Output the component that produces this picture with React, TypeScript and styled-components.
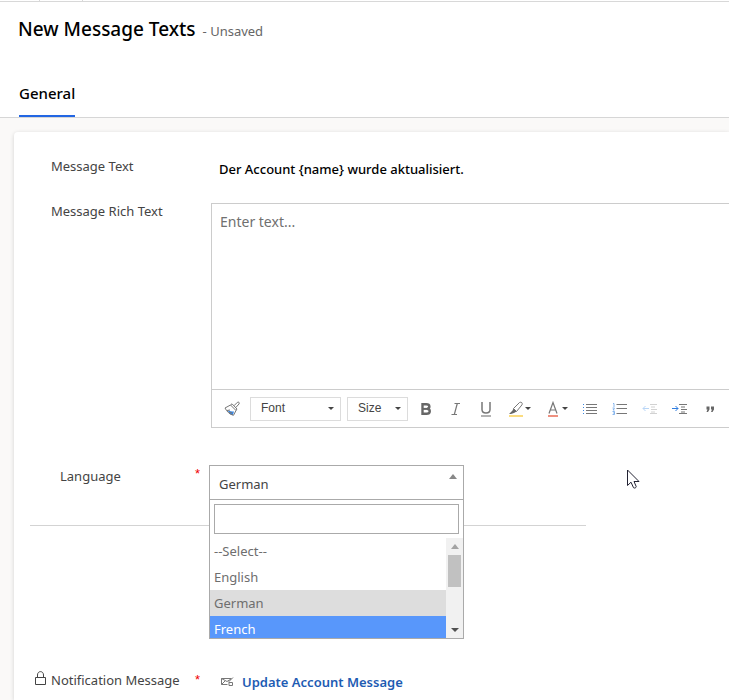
import React from "react";
import styled, { createGlobalStyle, css } from "styled-components";

const GlobalStyle = createGlobalStyle`
  *, *::before, *::after { box-sizing: border-box; }
  body {
    margin: 0;
    background: #faf9f8;
    font-family: "Segoe UI", "Noto Sans", sans-serif;
    font-size: 13px;
    line-height: 20px;
    color: #444444;
  }
  button, input, select, textarea { font: inherit; color: inherit; margin: 0; }
`;

const Page = styled.div`
  min-height: 100vh;
  display: flex;
  flex-direction: column;
  overflow: hidden;
`;

const CommandEdge = styled.div`
  display: flex;
  height: 2px;
  padding-left: 39px;
  background: #fff;
  border-bottom: 1px solid #d8d8d8;
`;

const EdgeCell = styled.span`
  width: 44px;
  border: solid #d8d8d8;
  border-width: 0 1px;
`;

const Header = styled.header`
  background: #fff;
  border-bottom: 1px solid #d6d6d6;
  padding: 13px 18px 0;
`;

const TitleLine = styled.div`
  display: flex;
  align-items: baseline;
  gap: 7px;
`;

const Title = styled.h1`
  margin: 0;
  font-size: 19px;
  line-height: 28px;
  font-weight: 500;
  color: #000;
`;

const Status = styled.span`
  color: #666;
`;

const TabList = styled.div`
  display: flex;
  margin: 37px 0 0 1px;
`;

const Tab = styled.button`
  height: 37px;
  padding: 0 0 10px;
  border: 0;
  border-bottom: 2px solid #2266e3;
  background: none;
  color: #000;
  font-size: 15px;
  font-weight: 500;
`;

const Card = styled.main`
  flex: 1;
  margin: 14px 0 0 14px;
  padding: 24px 0 8px;
  background: #fff;
  border-top-left-radius: 4px;
  box-shadow: 0 1px 4px rgba(0, 0, 0, 0.16);
`;

const Field = styled.div<{ $gap?: number }>`
  display: grid;
  grid-template-columns: 160px minmax(0, 1fr);
  padding-left: 37px;
  margin-bottom: ${(p) => p.$gap ?? 0}px;
`;

const Label = styled.label``;

const TextValue = styled.input`
  height: 24px;
  padding: 2px 8px 0;
  border: 0;
  background: none;
  color: #000;
  font-weight: 500;
  width: 100%;
`;

const Editor = styled.div`
  border: 1px solid #cccccc;
  border-right: 0;
`;

const RichLabel = styled(Label)`
  margin-top: -2px;
`;

const EditorText = styled.textarea`
  display: block;
  width: 100%;
  height: 185px;
  padding: 8px;
  border: 0;
  resize: none;
  outline: none;
  font-family: "Comic Sans MS", "Noto Sans", sans-serif;
  font-size: 14px;
  &::placeholder { color: #707070; opacity: 1; }
`;

const Toolbar = styled.div`
  display: flex;
  align-items: center;
  height: 38px;
  padding-left: 5px;
  border-top: 1px solid #cccccc;
  overflow: hidden;
`;

const Tool = styled.button<{ $wide?: boolean }>`
  flex: none;
  display: flex;
  align-items: center;
  justify-content: center;
  gap: 1px;
  width: ${(p) => (p.$wide ? 37 : 30)}px;
  height: 30px;
  padding: 0;
  border: 0;
  background: none;
`;

const Picker = styled.span<{ $width: number }>`
  flex: none;
  display: grid;
  align-items: center;
  width: ${(p) => p.$width}px;
  height: 24px;
  margin: 0 3px;
  border: 1px solid #dcdcdc;
  > * { grid-area: 1 / 1; }
  > svg { justify-self: end; margin-right: 6px; pointer-events: none; }
`;

const PickerSelect = styled.select`
  width: 100%;
  height: 22px;
  padding: 0 10px 2px;
  border: 0;
  appearance: none;
  background: none;
  font-family: "Liberation Sans", Arial, sans-serif;
  font-size: 12px;
`;

const LanguageSection = styled.section`
  display: flex;
  align-items: flex-start;
  width: 100%;
  max-width: 556px;
  height: 61px;
  margin: 37px 0 0 16px;
  padding-left: 30px;
  border-bottom: 1px solid #d3d3d3;
`;

const LanguageLabel = styled.label`
  width: 135px;
  padding-top: 1px;
`;

const Required = styled.span`
  width: 14px;
  font-family: "Liberation Sans", Arial, sans-serif;
  line-height: 18px;
  color: #f00000;
`;

const Combo = styled.div`
  position: relative;
  flex: none;
  width: 255px;
`;

const ComboHead = styled.button`
  display: flex;
  justify-content: space-between;
  width: 100%;
  height: 35px;
  padding: 8px 6px 0 9px;
  border: 1px solid #aaaaaa;
  background: #fff;
  text-align: left;
`;

const ComboPopup = styled.div`
  position: absolute;
  top: 100%;
  left: 0;
  right: 0;
  border: 1px solid #aaaaaa;
  border-top: 0;
  background: #fff;
`;

const SearchBox = styled.div`
  padding: 4px;
`;

const SearchInput = styled.input`
  display: block;
  width: 100%;
  height: 30px;
  padding: 4px;
  border: 1px solid #aaaaaa;
  outline: none;
`;

const ListArea = styled.div`
  display: flex;
  height: 100px;
`;

const Options = styled.ul`
  flex: 1;
  margin: 0;
  padding: 0;
  list-style: none;
  overflow: hidden;
`;

const Option = styled.li<{ $state?: "selected" | "active" }>`
  height: 26px;
  padding: 3px 4px;
  color: #6e6e6e;
  ${(p) => p.$state === "selected" && css`background: #dddddd;`}
  ${(p) => p.$state === "active" && css`background: #5897fb; color: #fff;`}
`;

const ScrollTrack = styled.div`
  display: flex;
  flex-direction: column;
  align-items: center;
  width: 17px;
  background: #f1f1f1;
`;

const ScrollArrow = styled.span`
  display: flex;
  align-items: center;
  justify-content: center;
  height: 17px;
  &:last-child { margin-top: auto; }
`;

const ScrollThumb = styled.span`
  width: 13px;
  height: 32px;
  background: #c1c1c1;
`;

const LookupRow = styled.div`
  display: flex;
  align-items: center;
  margin-top: 142px;
  padding-left: 20px;
`;

const LockSlot = styled.span`
  display: flex;
  width: 17px;
  padding: 0 0 4px 1px;
`;

const LookupLabel = styled.span`
  width: 144px;
`;

const LookupLink = styled.a`
  display: flex;
  align-items: center;
  gap: 8px;
  margin: 4px 0 0 12px;
  color: #1e5cb3;
  font-weight: 600;
  text-decoration: none;
`;

const Pointer = styled.svg`
  position: absolute;
  left: 627px;
  top: 469px;
  pointer-events: none;
`;

function Caret({ up = false, color = "#444", size = 6 }: { up?: boolean; color?: string; size?: number }) {
  return (
    <svg width={size} height={size / 2 + (up ? 1 : 0)} viewBox={up ? "0 0 8 5" : "0 0 8 4"} aria-hidden="true">
      <path d={up ? "M0 5 4 0l4 5z" : "M0 0h8L4 4z"} fill={color} />
    </svg>
  );
}

function Icon({ children, size = 16 }: { children: React.ReactNode; size?: number }) {
  return (
    <svg width={size} height={size} viewBox="0 0 16 16" fill="none" stroke="#777" aria-hidden="true">
      {children}
    </svg>
  );
}

const BrushIcon = () => (
  <Icon>
    <path d="M3.500 9.500c2 .5 4.500 1 6.500 1L8.800 14.300 6.500 13.500z" fill="#3b86df" stroke="none" />
    <path d="M1 7 6.500 4l5.500 5.500-2.500 4.800C6 13.500 3 11 1 7zM6.500 4 8 2.800 13 8l-1 1.500M10 4.700l3.300-3.300c1.200-1 2.600.3 1.700 1.600L11.800 6.500M3 9.500l3-.5M5 12l3-.5" />
  </Icon>
);

const BoldIcon = () => (
  <Icon>
    <path d="M4.500 3.200h3.800c4 0 3.900 4.300.8 4.600 3.600.3 3.700 5-.6 5h-4z" stroke="#666" strokeWidth="2.400" />
    <path d="M4 7.900h5" stroke="#666" strokeWidth="2" />
  </Icon>
);

const ItalicIcon = () => (
  <Icon><path d="M6.500 2.500H12M3.500 13.500H9M9.300 2.500l-3 11" strokeWidth="1.200" /></Icon>
);

const UnderlineIcon = () => (
  <Icon>
    <path d="M4 1v7.500c0 4.700 8 4.700 8 0V1" strokeWidth="1.500" />
    <path d="M3 15h10" stroke="#aaa" strokeWidth="1.800" />
  </Icon>
);

const HighlightIcon = () => (
  <Icon>
    <path d="M1 15h14" stroke="#fbdc80" strokeWidth="2" />
    <path d="M5.500 7.500 11.500 1.500c1.800-1 3.400.500 2.500 2.300L8.500 10.500z" />
    <path d="M5.500 7.500 8.500 10.500 6 12 3 13H1L4.500 9.500z" fill="#666" stroke="none" />
  </Icon>
);

const TextColorIcon = () => (
  <Icon>
    <path d="M4 12.500 8 1.500l4 11M5.300 9h5.400" strokeWidth="1.200" />
    <path d="M3 15h10" stroke="#ee9080" strokeWidth="2" />
  </Icon>
);

const BulletIcon = () => (
  <Icon>
    <path d="M4 3.500h11M4 6.500h11M4 9.500h11M4 12.500h11" />
    <path d="M1 3.500h1M1 6.500h1M1 9.500h1M1 12.500h1" stroke="#3b86df" />
  </Icon>
);

const NumberIcon = () => (
  <Icon>
    <path d="M4.500 3.500H15M4.500 7.500H15M4.500 12.500H15" />
    <path d="M1 2.500h1V6M.5 7h2L1 9h1.500M.5 10.500h2v3h-2M1 12h1.500" stroke="#6ba5ea" strokeWidth=".8" />
  </Icon>
);

const OutdentIcon = () => (
  <Icon>
    <path d="M8 3.500h7M9 6h4M9 8.500h6M9 11h4M8 12.500h7" stroke="#d2d2d2" />
    <path d="M7 7.500H1M3.500 5 1 7.500l2.500 2.500" stroke="#b9d6f7" />
  </Icon>
);

const IndentIcon = () => (
  <Icon>
    <path d="M7 3.500h8M9 6h4M9 8.500h6M9 11h4M7 12.500h8" />
    <path d="M0 7.500h6M3.500 5 6 7.500l-2.500 2.500" stroke="#2f7de0" />
  </Icon>
);

const QuoteIcon = () => (
  <Icon>
    <path d="M4.500 5.500h3v3L6 11H4.500l1-2.500h-1zM9 5.500h3v3L10.500 11H9l1-2.500H9z" fill="#666" stroke="none" />
  </Icon>
);

const LockIcon = () => (
  <svg width="12" height="15" viewBox="0 0 12 15" fill="none" stroke="#444" aria-hidden="true">
    <path d="M.5 6.500h10v7H.5zM2.500 6.500V4c0-4.500 6-4.500 6 0v2.500" />
  </svg>
);

const MailIcon = () => (
  <svg width="13" height="10" viewBox="0 0 13 10" fill="none" stroke="#777" aria-hidden="true">
    <path d="M6.500 7.500H.5v-6h10M.5 1.500 6 4.500l4-2.500M.5 7.500 4 4M12 .5 8 4.500v4h3.500v-3H8" />
  </svg>
);

const languages: { name: string; state?: "selected" | "active" }[] = [
  { name: "--Select--" },
  { name: "English" },
  { name: "German", state: "selected" },
  { name: "French", state: "active" },
];

export default function App() {
  return (
    <Page>
      <GlobalStyle />
      <CommandEdge><EdgeCell /></CommandEdge>
      <Header>
        <TitleLine>
          <Title>New Message Texts</Title>
          <Status>- Unsaved</Status>
        </TitleLine>
        <TabList role="tablist">
          <Tab role="tab" aria-selected="true">General</Tab>
        </TabList>
      </Header>
      <Card>
        <Field $gap={23}>
          <Label htmlFor="message-text">Message Text</Label>
          <TextValue id="message-text" defaultValue="Der Account {name} wurde aktualisiert." />
        </Field>
        <Field>
          <RichLabel htmlFor="rich-text">Message Rich Text</RichLabel>
          <Editor>
            <EditorText id="rich-text" placeholder="Enter text..." />
            <Toolbar role="toolbar" aria-label="Formatting">
              <Tool aria-label="Copy formatting"><BrushIcon /></Tool>
              <Picker $width={91}>
                <PickerSelect aria-label="Font"><option>Font</option></PickerSelect>
                <Caret />
              </Picker>
              <Picker $width={61}>
                <PickerSelect aria-label="Size"><option>Size</option></PickerSelect>
                <Caret />
              </Picker>
              <Tool aria-label="Bold"><BoldIcon /></Tool>
              <Tool aria-label="Italic"><ItalicIcon /></Tool>
              <Tool aria-label="Underline"><UnderlineIcon /></Tool>
              <Tool $wide aria-label="Highlight color"><HighlightIcon /><Caret /></Tool>
              <Tool $wide aria-label="Text color"><TextColorIcon /><Caret /></Tool>
              <Tool aria-label="Bulleted list"><BulletIcon /></Tool>
              <Tool aria-label="Numbered list"><NumberIcon /></Tool>
              <Tool aria-label="Decrease indent"><OutdentIcon /></Tool>
              <Tool aria-label="Increase indent"><IndentIcon /></Tool>
              <Tool aria-label="Block quote"><QuoteIcon /></Tool>
            </Toolbar>
          </Editor>
        </Field>
        <LanguageSection>
          <LanguageLabel htmlFor="language">Language</LanguageLabel>
          <Required>*</Required>
          <Combo>
            <ComboHead id="language" aria-haspopup="listbox" aria-expanded="true">
              German
              <Caret up color="#888" size={8} />
            </ComboHead>
            <ComboPopup>
              <SearchBox><SearchInput aria-label="Search languages" /></SearchBox>
              <ListArea>
                <Options role="listbox" aria-label="Language">
                  {languages.map((l) => (
                    <Option key={l.name} role="option" aria-selected={l.state === "selected"} $state={l.state}>
                      {l.name}
                    </Option>
                  ))}
                </Options>
                <ScrollTrack aria-hidden="true">
                  <ScrollArrow><Caret up color="#a3a3a3" size={8} /></ScrollArrow>
                  <ScrollThumb />
                  <ScrollArrow><Caret color="#505050" size={8} /></ScrollArrow>
                </ScrollTrack>
              </ListArea>
            </ComboPopup>
          </Combo>
        </LanguageSection>
        <LookupRow>
          <LockSlot><LockIcon /></LockSlot>
          <LookupLabel>Notification Message</LookupLabel>
          <Required>*</Required>
          <LookupLink href="#update-account-message"><MailIcon />Update Account Message</LookupLink>
        </LookupRow>
      </Card>
      <Pointer width="13" height="20" viewBox="0 0 13 20" aria-hidden="true">
        <path d="M.5 1v15.500l3.500-3.300 2.500 5.500c1 .8 2.800.1 2.700-1.200L7 12.500h5z" fill="#fff" stroke="#222233" />
      </Pointer>
    </Page>
  );
}
